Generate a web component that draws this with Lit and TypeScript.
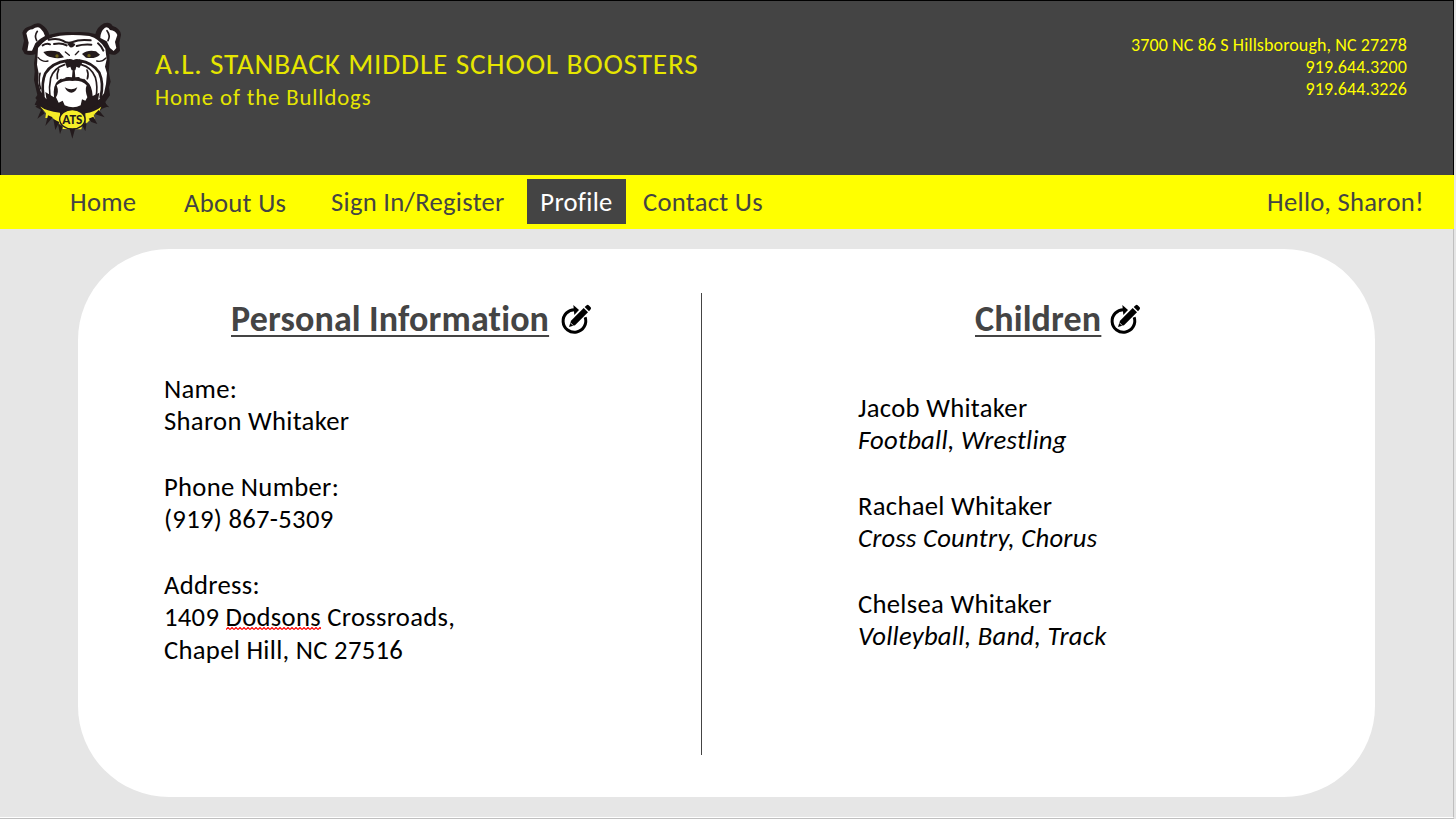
import { LitElement, html, css } from "lit";
import { customElement } from "lit/decorators.js";

@customElement("bulldog-logo")
export class BulldogLogo extends LitElement {
  static styles = css`
    :host { display: block; width: 125px; height: 135px; }
    svg { display: block; width: 100%; height: 100%; }
    .ink { fill: #231a1c; }
    .white { fill: #fff; }
    .line { fill: none; stroke: #231a1c; stroke-linecap: round; stroke-linejoin: round; }
    .gold { fill: #f6ee28; }
    .iris { fill: #6f641c; }
    .tag { fill: #231a1c; font: 700 44px "Carlito", "Lato", sans-serif; }
  `;
  render() {
    return html`<svg viewBox="0 0 375 405" aria-label="Bulldog">
      <path class="ink" d="M36 118 L42 92 L37 68 Q42 52 62 48 Q82 34 96 44 Q112 54 118 74 Q150 64 190 67 Q228 64 256 72 Q262 50 282 40 Q300 34 308 48 Q330 54 333 74 L328 98 L330 122 Q318 140 298 132 Q300 160 296 186 L302 215 L297 232 L300 256 L286 276 L292 290 L276 296 L262 310 L150 320 L110 308 L94 300 L76 290 L88 280 L76 264 L82 255 L72 210 L74 185 L72 160 L76 133 Q60 138 44 132 Z"/>
      <path class="gold" d="M90 289 Q108 304 150 308 L152 344 L138 332 L128 324 L106 324 L108 310 Z M274 290 Q254 306 226 310 L228 342 L242 328 L254 326 L251 314 L266 308 Z M158 347 L216 348 L214 358 L158 357 Z"/>
      <path class="ink" d="M94 298 L104 310 L82 326 Z M114 316 L128 322 L106 348 Z M130 328 L148 336 L136 360 Z M144 342 L158 350 L150 373 Z M178 354 L196 354 L187 386 Z M216 344 L230 338 L226 364 Z M236 326 L250 320 L262 342 L244 336 Z M254 312 L266 300 L284 322 Z M272 288 L284 278 L298 292 Z M84 262 L74 284 L94 290 Z"/>
      <path class="white" d="M49 70 Q55 58 68 58 Q82 47 92 56 Q103 66 105 78 L90 87 L76 100 L66 122 L52 122 L56 98 Z"/>
      <path class="white" d="M271 84 Q271 64 285 53 Q294 48 300 60 Q317 62 322 75 L315 96 L319 114 L311 123 L300 114 L290 94 Z"/>
      <path class="line" stroke-width="5" d="M82 64 Q72 78 80 92 M291 62 Q302 76 294 92"/>
      <path class="white" d="M84 114 Q106 82 150 77 Q190 73 238 78 Q268 86 286 116 L290 148 L285 170 L291 190 L288 222 L282 250 L268 268 L240 282 L218 292 L160 292 L132 280 L108 266 L92 244 L84 216 L86 190 L81 164 Z"/>
      <path class="line" stroke-width="6" d="M116 89 Q144 84 158 92 Q172 102 188 96 Q208 87 242 91 M132 102 Q154 97 170 106 M200 108 Q220 102 244 104 M98 106 Q110 99 120 103 M264 100 Q276 110 280 122"/>
      <path class="ink" d="M172 102 Q182 94 196 102 Q192 114 180 112 Z"/>
      <path class="ink" d="M100 126 Q122 118 148 126 L162 142 Q144 148 124 142 Q110 140 100 126 Z M216 132 Q234 118 258 124 L270 134 Q256 148 228 143 Z"/>
      <circle class="iris" cx="141" cy="138" r="5"/><circle class="iris" cx="237" cy="137" r="5"/>
      <path class="line" stroke-width="4" d="M166 126 L178 136 M206 124 L196 134 M84 142 Q98 158 114 153 M288 144 Q276 157 260 153"/>
      <path class="line" stroke-width="8" d="M172 152 Q126 158 106 190 Q94 218 100 258 M208 152 Q248 158 268 188 Q282 220 272 262"/>
      <path class="line" stroke-width="5" d="M164 164 Q132 174 122 204 Q116 232 120 262 M214 164 Q244 172 256 202 Q264 230 258 262 M146 178 Q140 190 142 206 M231 180 Q237 192 232 206 M90 190 Q84 214 92 236"/>
      <path class="ink" d="M164 154 Q176 142 190 150 Q206 142 218 156 L208 174 L199 170 L196 181 L185 181 L181 170 L171 174 Z"/>
      <path class="ink" d="M188 178 L194 178 L196 202 Q218 198 230 214 Q246 226 248 258 L268 248 L262 284 L232 298 L142 298 L112 284 L106 246 L132 262 Q128 224 144 212 Q162 198 186 202 Z"/>
      <path class="white" d="M140 226 Q160 210 187 213 Q214 210 230 226 Q224 240 232 262 L226 272 L216 268 L212 286 Q190 298 164 286 L158 272 L146 278 L138 262 Q148 246 140 226 Z"/>
      <path class="white" d="M158 187 L167 204 L154 208 Z M217 187 L222 208 L208 204 Z"/>
      <path class="ink" d="M164 232 Q184 244 202 232 Q196 248 184 248 Q172 248 164 232 Z"/>
      <ellipse class="gold" cx="187" cy="328" rx="38" ry="29" stroke="#231a1c" stroke-width="4"/>
      <text class="tag" x="187" y="342" text-anchor="middle" textLength="60" lengthAdjust="spacingAndGlyphs">ATS</text>
    </svg>`;
  }
}

@customElement("edit-icon")
export class EditIcon extends LitElement {
  static styles = css`
    :host { display: block; width: 30px; height: 31px; }
    svg { display: block; width: 100%; height: 100%; }
  `;
  render() {
    return html`<svg viewBox="0 0 90 93">
      <path d="M42 17 A34 34 0 1 0 72.5 40" fill="none" stroke="#000" stroke-width="9"/>
      <path d="M37 3 L54 18 L40 33 Z"/>
      <path d="M24 69 L30 50 L68 12 L81 25 L42 64 Z"/>
      <path d="M71 9 L77 4 Q80 1 83 4 L89 10 Q91 13 89 16 L84 22 Z"/>
      <path d="M28 56 L37 65" stroke="#fff" stroke-width="2.5"/>
    </svg>`;
  }
}

@customElement("app-root")
export class AppRoot extends LitElement {
  static styles = css`
    :host { display: block; width: 1456px; height: 819px; overflow: hidden; background: #e6e6e6;
      font-family: "Carlito", "Calibri", "Lato", sans-serif; font-variant-ligatures: none; color: #000; }
    .page { width: 1454px; height: 819px; box-sizing: border-box; display: flex; flex-direction: column;
      border-bottom: 1px solid #bfbfbf; }
    header { flex: none; height: 175px; box-sizing: border-box; display: flex; background: #444;
      border: 1px solid #000; border-bottom: 0; padding: 9px 46px 0 9px; }
    .brand { margin: 36px auto 0 20px; color: #e6e600; }
    .brand h1 { margin: 0; font-size: 29.33px; line-height: 36px; font-weight: 400; letter-spacing: 0.8px; }
    .brand p { margin: 0; font-size: 22.67px; line-height: 30px; letter-spacing: 0.9px; }
    .contact { margin-top: 24px; text-align: right; color: #ff0; font-size: 18px; line-height: 22px; letter-spacing: 0.1px; }
    nav { flex: none; height: 54px; box-sizing: border-box; display: flex; align-items: flex-start; background: #ff0;
      padding: 4px 30px 0 70px; font-size: 26.67px; line-height: 47px; letter-spacing: 0.28px; color: #444; }
    nav > * { white-space: nowrap; }
    .home { width: 114px; }
    .about { width: 147px; padding-top: 1px; }
    .sign { width: 196px; }
    .profile { width: 99px; height: 45px; background: #444; color: #fff; text-align: center; margin-right: 17px; }
    .hello { margin-left: auto; }
    main { flex: 1; box-sizing: border-box; padding: 20px 78px 0 78px; border-right: 1px solid #bfbfbf; border-bottom: 1px solid #fff; }
    .card { height: 548px; border-radius: 91px; background: #fff; box-sizing: border-box; display: flex; padding-top: 44px; }
    .left { width: 623px; }
    .rule { width: 1px; height: 462px; background: #444; }
    h2 { margin: 0; font-size: 36px; line-height: 44px; font-weight: 700; color: #444; letter-spacing: 0.14px;
      text-decoration: underline; text-decoration-thickness: 2px; text-underline-offset: 4px; }
    .head { display: flex; height: 44px; padding-top: 4px; }
    .left .head { padding-left: 153px; gap: 12px; }
    .right .head { padding-left: 273px; gap: 9px; }
    edit-icon { margin-top: 7px; }
    .body { font-size: 26.67px; line-height: 32.67px; letter-spacing: 0.29px; }
    .left .body { padding: 31.6px 0 0 86px; }
    .right .body { padding: 50.6px 0 0 156px; }
    i { letter-spacing: 0.25px; }
    .typo { background: url("data:image/svg+xml,%3Csvg xmlns='http://www.w3.org/2000/svg' width='4' height='3'%3E%3Cpath d='M0 2.5L2 .5L4 2.5' fill='none' stroke='red' stroke-width='1.2'/%3E%3C/svg%3E") repeat-x 0 calc(100% - 3px); }
  `;
  render() {
    return html`<div class="page">
      <header>
        <bulldog-logo></bulldog-logo>
        <div class="brand"><h1>A.L. STANBACK MIDDLE SCHOOL BOOSTERS</h1><p>Home of the Bulldogs</p></div>
        <div class="contact">3700 NC 86 S Hillsborough, NC 27278<br>919.644.3200<br>919.644.3226</div>
      </header>
      <nav>
        <span class="home">Home</span><span class="about">About Us</span><span class="sign">Sign In/Register</span>
        <span class="profile">Profile</span><span>Contact Us</span><span class="hello">Hello, Sharon!</span>
      </nav>
      <main><div class="card">
        <section class="left">
          <div class="head"><h2>Personal Information</h2><edit-icon></edit-icon></div>
          <div class="body">Name:<br>Sharon Whitaker<br><br>Phone Number:<br>(919) 867-5309<br><br>Address:<br>1409 <span class="typo">Dodsons</span> Crossroads,<br>Chapel Hill, NC 27516</div>
        </section>
        <div class="rule"></div>
        <section class="right">
          <div class="head"><h2>Children</h2><edit-icon></edit-icon></div>
          <div class="body">Jacob Whitaker<br><i>Football, Wrestling</i><br><br>Rachael Whitaker<br><i>Cross Country, Chorus</i><br><br>Chelsea Whitaker<br><i>Volleyball, Band, Track</i></div>
        </section>
      </div></main>
    </div>`;
  }
}
